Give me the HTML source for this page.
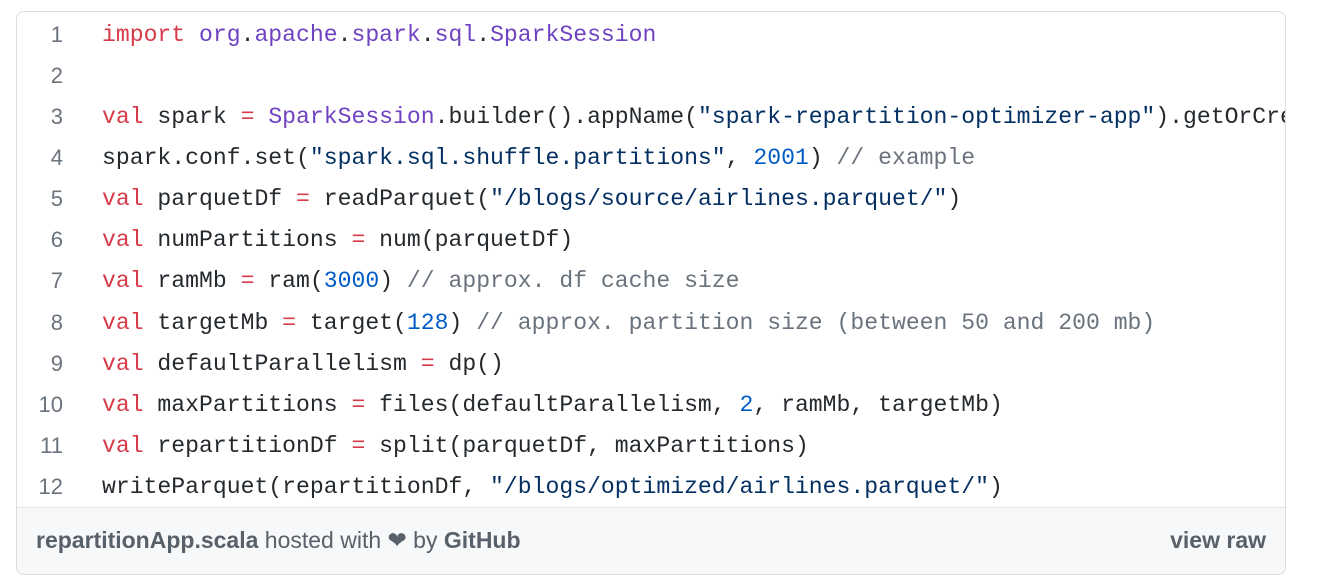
<!DOCTYPE html>
<html><head><style>
body{margin:0;width:1318px;height:584px;background:#fff;overflow:hidden;position:relative}
.box{position:absolute;left:16px;top:11px;width:1268px;height:562px;border:1px solid #ddd;border-radius:8px;overflow:hidden;background:#fff}
.clip{position:absolute;left:0;top:0;width:1268px;height:562px;overflow:hidden}
.ln{position:absolute;left:0;width:46px;text-align:right;color:#6a737d;font:22px "Liberation Sans",sans-serif}
.code{position:absolute;left:85px;white-space:pre;color:#24292e;font:23.1px "Liberation Mono",monospace;letter-spacing:0}
.k{color:#d73a49}.p{color:#6f42c1}.s{color:#032f62}.n{color:#005cc5}.c{color:#6a737d}
.foot{position:absolute;left:0;top:495px;width:1268px;height:67px;background:#f6f8fa;border-top:1px solid #e5e5e5;font:23px "Liberation Sans",sans-serif;color:#586069}
.foot .l{position:absolute;left:19px;top:19px}
.foot .r{position:absolute;right:19px;top:19px;font-weight:bold}
b{color:#586069}
</style></head><body>
<div class="box"><div class="clip">
<div class="ln" style="top:10px">1</div><div class="code" style="top:10px"><span class="k">import</span> <span class="p">org</span>.<span class="p">apache</span>.<span class="p">spark</span>.<span class="p">sql</span>.<span class="p">SparkSession</span></div>
<div class="ln" style="top:51px">2</div>
<div class="ln" style="top:92px">3</div><div class="code" style="top:92px"><span class="k">val</span> spark <span class="k">=</span> <span class="p">SparkSession</span>.builder().appName(<span class="s">"spark-repartition-optimizer-app"</span>).getOrCreate()</div>
<div class="ln" style="top:133px">4</div><div class="code" style="top:133px">spark.conf.set(<span class="s">"spark.sql.shuffle.partitions"</span>, <span class="n">2001</span>) <span class="c">// example</span></div>
<div class="ln" style="top:174px">5</div><div class="code" style="top:174px"><span class="k">val</span> parquetDf <span class="k">=</span> readParquet(<span class="s">"/blogs/source/airlines.parquet/"</span>)</div>
<div class="ln" style="top:215px">6</div><div class="code" style="top:215px"><span class="k">val</span> numPartitions <span class="k">=</span> num(parquetDf)</div>
<div class="ln" style="top:256px">7</div><div class="code" style="top:256px"><span class="k">val</span> ramMb <span class="k">=</span> ram(<span class="n">3000</span>) <span class="c">// approx. df cache size</span></div>
<div class="ln" style="top:298px">8</div><div class="code" style="top:298px"><span class="k">val</span> targetMb <span class="k">=</span> target(<span class="n">128</span>) <span class="c">// approx. partition size (between 50 and 200 mb)</span></div>
<div class="ln" style="top:339px">9</div><div class="code" style="top:339px"><span class="k">val</span> defaultParallelism <span class="k">=</span> dp()</div>
<div class="ln" style="top:380px">10</div><div class="code" style="top:380px"><span class="k">val</span> maxPartitions <span class="k">=</span> files(defaultParallelism, <span class="n">2</span>, ramMb, targetMb)</div>
<div class="ln" style="top:421px">11</div><div class="code" style="top:421px"><span class="k">val</span> repartitionDf <span class="k">=</span> split(parquetDf, maxPartitions)</div>
<div class="ln" style="top:462px">12</div><div class="code" style="top:462px">writeParquet(repartitionDf, <span class="s">"/blogs/optimized/airlines.parquet/"</span>)</div>
<div class="foot"><span class="l"><b>repartitionApp.scala</b> hosted with ❤ by <b>GitHub</b></span><span class="r">view raw</span></div>
</div></div>
</body></html>
